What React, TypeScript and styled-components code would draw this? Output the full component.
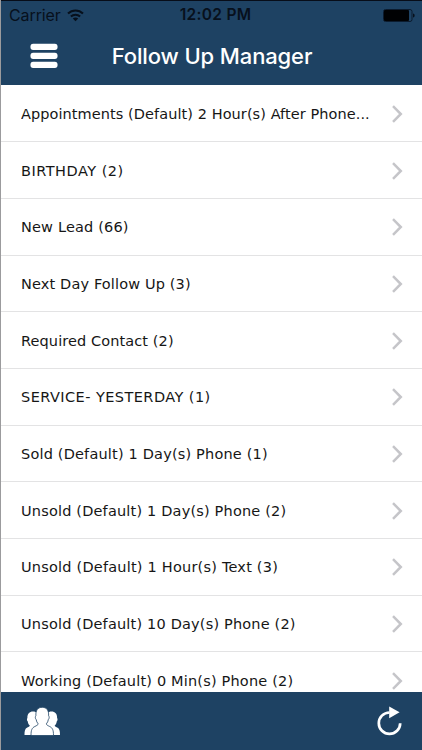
import React from "react";
import styled, { createGlobalStyle } from "styled-components";

const GlobalStyle = createGlobalStyle`
  * { box-sizing: border-box; }
  body { margin: 0; background: #fff; overflow: hidden; }
`;

const Screen = styled.div`
  width: 422px;
  height: 750px;
  display: flex;
  flex-direction: column;
  overflow: hidden;
  background: #fff;
  border-left: 1px solid #9b9b9d;
`;

const Header = styled.header`
  flex: none;
  height: 85px;
  background: #1e4263;
  border-top: 1px solid #070d19;
  display: flex;
  flex-direction: column;
`;

const StatusBar = styled.div`
  height: 27px;
  display: grid;
  grid-template-columns: 1fr auto 1fr;
  align-items: center;
  padding: 0 7px 0 8px;
  color: #07101c;
  font: 400 16px/27px Inter, sans-serif;
`;

const Carrier = styled.div`
  display: flex;
  align-items: center;
  gap: 6px;
  letter-spacing: -0.1px;
`;

const Clock = styled.div`
  font-weight: 600;
  font-size: 15.5px;
  line-height: 28px;
  letter-spacing: 0.3px;
  padding-left: 7px;
`;

const Battery = styled.div`
  display: flex;
  justify-content: flex-end;
`;

const NavBar = styled.div`
  height: 56px;
  display: grid;
  grid-template-columns: 86px 1fr 85px;
  align-items: center;
`;

const IconButton = styled.button`
  padding: 0;
  border: 0;
  background: none;
  display: flex;
  color: #fff;
`;

const MenuButton = styled(IconButton)`
  margin-left: 29px;
`;

const Title = styled.h1`
  margin: 0;
  text-align: center;
  white-space: nowrap;
  color: #fff;
  font: 500 22px/56px Inter, sans-serif;
  letter-spacing: -0.12px;
`;

const List = styled.ul`
  flex: 1;
  min-height: 0;
  margin: 0;
  padding: 0.6px 0 0;
  list-style: none;
  overflow: hidden;
`;

const Row = styled.li`
  height: 56.7px;
  display: flex;
  align-items: center;
  padding: 1px 19px 0 20px;
  border-bottom: 1px solid #e3e3e4;
`;

const Label = styled.span<{ $spacing: number }>`
  flex: none;
  width: 352px;
  overflow: hidden;
  white-space: nowrap;
  color: #161616;
  font: 400 14.5px/24px "DejaVu Sans", sans-serif;
  letter-spacing: ${(p) => p.$spacing}px;
`;

const Chevron = styled.svg`
  flex: none;
  margin-left: auto;
`;

const Toolbar = styled.footer`
  flex: none;
  height: 58px;
  background: #1e4263;
  display: flex;
  align-items: center;
  justify-content: space-between;
  padding: 0 19px 0 23px;
`;

const items: { text: string; spacing: number }[] = [
  { text: "Appointments (Default) 2 Hour(s) After Phone...", spacing: 0.07 },
  { text: "BIRTHDAY (2)", spacing: 0.5 },
  { text: "New Lead (66)", spacing: 0.17 },
  { text: "Next Day Follow Up (3)", spacing: 0.14 },
  { text: "Required Contact (2)", spacing: 0.1 },
  { text: "SERVICE- YESTERDAY (1)", spacing: 0.44 },
  { text: "Sold (Default) 1 Day(s) Phone (1)", spacing: 0.18 },
  { text: "Unsold (Default) 1 Day(s) Phone (2)", spacing: 0.18 },
  { text: "Unsold (Default) 1 Hour(s) Text (3)", spacing: 0.21 },
  { text: "Unsold (Default) 10 Day(s) Phone (2)", spacing: 0.18 },
  { text: "Working (Default) 0 Min(s) Phone (2)", spacing: 0.18 },
];

const WifiIcon = () => (
  <svg width="17" height="13" viewBox="0 0 17 13" fill="none" stroke="#07101c" strokeWidth="2.1">
    <path d="M1 4.6C5.2.5 11.8.5 16 4.6" />
    <path d="M3.9 7.5c2.6-2.4 6.6-2.4 9.2 0" />
    <path d="M8.5 12.2 5.8 9.5c1.5-1.3 3.9-1.3 5.4 0z" fill="#07101c" stroke="none" />
  </svg>
);

const BatteryIcon = () => (
  <svg width="32" height="13" viewBox="0 0 32 13">
    <rect x="0.5" y="0.5" width="28.5" height="12" rx="2" fill="none" stroke="#0b1b2e" />
    <rect x="1" y="1" width="25" height="11" rx="1" fill="#000103" />
    <path d="M30 4.5c2.2.4 2.2 3.6 0 4z" fill="#07101c" />
  </svg>
);

const MenuIcon = () => (
  <svg width="28" height="26" viewBox="0 0 28 26" fill="currentColor">
    <rect x="0.5" y="0.7" width="27" height="6.2" rx="2.6" />
    <rect x="0.5" y="9.7" width="27" height="6.2" rx="2.6" />
    <rect x="0.5" y="18.7" width="27" height="6.2" rx="2.6" />
  </svg>
);

const ChevronIcon = () => (
  <Chevron width="12" height="18" viewBox="0 0 12 18" fill="none" stroke="#c5c5c9" strokeWidth="2.5">
    <path d="M2 1.2 9.8 9 2 16.8" />
  </Chevron>
);

const sidePerson =
  "M.5 28c0-4 .4-6.200 2.800-7.400 1.700-.8 2.500-1 2.500-2-1.300-1.200-1.800-2.600-2-4.200-1-.9-1.100-2.700-.4-3.500C3.200 7 5.500 4.600 9 4.600s5.800 2.400 5.600 6.300c.7.800.6 2.600-.4 3.500L15 28z";

const PeopleIcon = () => (
  <svg width="37" height="29" viewBox="0 0 37 29" fill="currentColor">
    <path d={sidePerson} />
    <path d={sidePerson} transform="matrix(-1 0 0 1 36.500 0)" />
    <path
      d="M7 28.500c0-5.600 1-7.600 3.800-9 2-1 3.300-1.500 3.300-2.700-1.100-1.200-1.700-2.600-1.900-4.200-1-.9-1.200-3-.3-3.800C11.500 3.500 13.800.3 18.250.3s6.750 3.200 6.350 8.500c.9.800.7 2.900-.3 3.800-.2 1.600-.8 3-1.900 4.200 0 1.200 1.300 1.700 3.300 2.700 2.800 1.400 3.800 3.400 3.800 9z"
      stroke="#1e4263"
      strokeWidth="0.8"
    />
  </svg>
);

const RefreshIcon = () => (
  <svg width="26" height="30" viewBox="0 0 26 30" fill="none">
    <path d="M23.200 17.200A10.700 10.700 0 1 1 12.500 6.500" stroke="currentColor" strokeWidth="2.700" />
    <path d="M12.200.6 22.600 6.300l-10.400 6z" fill="currentColor" />
  </svg>
);

export default function App() {
  return (
    <>
      <GlobalStyle />
      <Screen>
        <Header>
          <StatusBar>
            <Carrier>
              <span>Carrier</span>
              <WifiIcon />
            </Carrier>
            <Clock>12:02 PM</Clock>
            <Battery>
              <BatteryIcon />
            </Battery>
          </StatusBar>
          <NavBar>
            <MenuButton aria-label="Menu">
              <MenuIcon />
            </MenuButton>
            <Title>Follow Up Manager</Title>
          </NavBar>
        </Header>
        <List>
          {items.map((item) => (
            <Row key={item.text}>
              <Label $spacing={item.spacing}>{item.text}</Label>
              <ChevronIcon />
            </Row>
          ))}
        </List>
        <Toolbar>
          <IconButton aria-label="Contacts">
            <PeopleIcon />
          </IconButton>
          <IconButton aria-label="Refresh">
            <RefreshIcon />
          </IconButton>
        </Toolbar>
      </Screen>
    </>
  );
}
